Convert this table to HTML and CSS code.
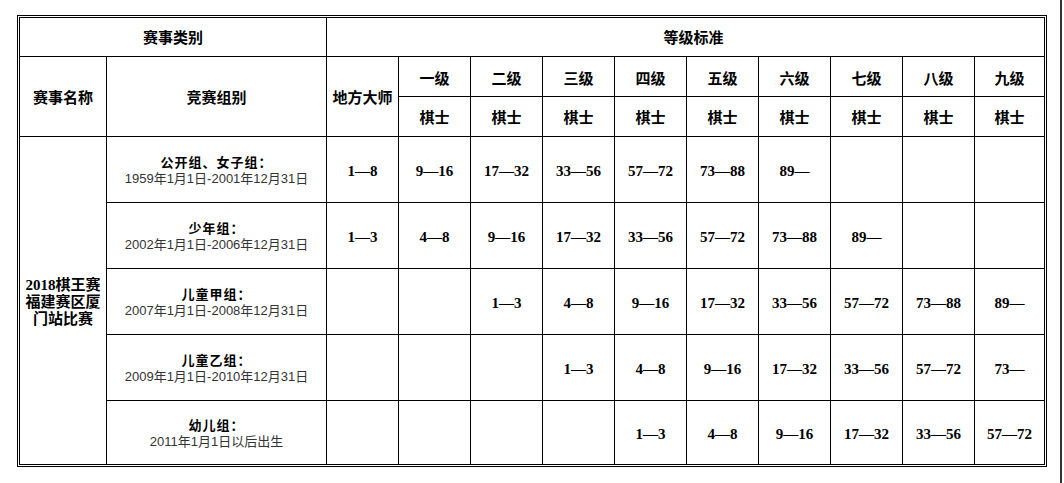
FILE: index.html
```html
<!DOCTYPE html>
<html lang="zh">
<head>
<meta charset="utf-8">
<title>等级标准</title>
<link rel="stylesheet" href="styles.css">
</head>
<body>
<div class="page">
  <div class="frame">
    <div class="grid">
      <div class="cell head span-cat">赛事类别</div>
      <div class="cell head span-std">等级标准</div>

      <div class="cell head rows-2">赛事名称</div>
      <div class="cell head rows-2">竞赛组别</div>
      <div class="cell head rows-2">地方大师</div>
      <div class="cell head lvl">一级</div>
      <div class="cell head lvl">二级</div>
      <div class="cell head lvl">三级</div>
      <div class="cell head lvl">四级</div>
      <div class="cell head lvl">五级</div>
      <div class="cell head lvl">六级</div>
      <div class="cell head lvl">七级</div>
      <div class="cell head lvl">八级</div>
      <div class="cell head lvl">九级</div>
      <div class="cell head">棋士</div>
      <div class="cell head">棋士</div>
      <div class="cell head">棋士</div>
      <div class="cell head">棋士</div>
      <div class="cell head">棋士</div>
      <div class="cell head">棋士</div>
      <div class="cell head">棋士</div>
      <div class="cell head">棋士</div>
      <div class="cell head">棋士</div>

      <div class="cell event rows-5">2018棋王赛<br>福建赛区厦<br>门站比赛</div>

      <div class="cell group"><span class="g-name">公开组、女子组：</span><span class="g-date">1959年1月1日-2001年12月31日</span></div>
      <div class="cell num">1—8</div>
      <div class="cell num">9—16</div>
      <div class="cell num">17—32</div>
      <div class="cell num">33—56</div>
      <div class="cell num">57—72</div>
      <div class="cell num">73—88</div>
      <div class="cell num">89—</div>
      <div class="cell num"></div>
      <div class="cell num"></div>
      <div class="cell num"></div>

      <div class="cell group"><span class="g-name">少年组：</span><span class="g-date">2002年1月1日-2006年12月31日</span></div>
      <div class="cell num">1—3</div>
      <div class="cell num">4—8</div>
      <div class="cell num">9—16</div>
      <div class="cell num">17—32</div>
      <div class="cell num">33—56</div>
      <div class="cell num">57—72</div>
      <div class="cell num">73—88</div>
      <div class="cell num">89—</div>
      <div class="cell num"></div>
      <div class="cell num"></div>

      <div class="cell group"><span class="g-name">儿童甲组：</span><span class="g-date">2007年1月1日-2008年12月31日</span></div>
      <div class="cell num"></div>
      <div class="cell num"></div>
      <div class="cell num">1—3</div>
      <div class="cell num">4—8</div>
      <div class="cell num">9—16</div>
      <div class="cell num">17—32</div>
      <div class="cell num">33—56</div>
      <div class="cell num">57—72</div>
      <div class="cell num">73—88</div>
      <div class="cell num">89—</div>

      <div class="cell group"><span class="g-name">儿童乙组：</span><span class="g-date">2009年1月1日-2010年12月31日</span></div>
      <div class="cell num"></div>
      <div class="cell num"></div>
      <div class="cell num"></div>
      <div class="cell num">1—3</div>
      <div class="cell num">4—8</div>
      <div class="cell num">9—16</div>
      <div class="cell num">17—32</div>
      <div class="cell num">33—56</div>
      <div class="cell num">57—72</div>
      <div class="cell num">73—</div>

      <div class="cell group"><span class="g-name">幼儿组：</span><span class="g-date">2011年1月1日以后出生</span></div>
      <div class="cell num"></div>
      <div class="cell num"></div>
      <div class="cell num"></div>
      <div class="cell num"></div>
      <div class="cell num">1—3</div>
      <div class="cell num">4—8</div>
      <div class="cell num">9—16</div>
      <div class="cell num">17—32</div>
      <div class="cell num">33—56</div>
      <div class="cell num">57—72</div>
    </div>
  </div>
</div>
</body>
</html>
```

FILE: styles.css
```css
html, body {
  margin: 0;
  padding: 0;
  background: #fff;
}

.page {
  box-sizing: border-box;
  width: 1062px;
  height: 483px;
  padding: 15px 0 0 17px;
  border-right: 2px solid #333;
}

.frame {
  width: 1024px;
  border: 3px double #000;
}

.grid {
  display: grid;
  grid-template-columns: 86px 219px 71px repeat(8, 71px) 69px;
  grid-template-rows: 38px 39px 39px 65px 65px 65px 65px 63px;
  gap: 1px;
  background: #000;
}

.cell {
  background: #fff;
  display: flex;
  flex-direction: column;
  align-items: center;
  justify-content: center;
  text-align: center;
  color: #000;
  font-family: "Liberation Serif", "Noto Sans CJK SC", serif;
}

.head {
  font-family: "Noto Sans CJK SC", sans-serif;
  font-weight: 700;
  font-size: 15px;
  line-height: 18px;
}

.lvl {
  padding-top: 3px;
}

.span-cat {
  grid-column: 1 / 3;
}

.span-std {
  grid-column: 3 / 13;
  padding-left: 16px;
}

.rows-2 {
  grid-row: span 2;
}

.rows-5 {
  grid-row: span 5;
}

.event {
  font-weight: 700;
  font-size: 15px;
  line-height: 17px;
  padding-top: 4px;
}

.group {
  line-height: 17px;
}

.g-name {
  font-family: "Noto Sans CJK SC", sans-serif;
  font-weight: 700;
  font-size: 13px;
  letter-spacing: 1px;
}

.g-date {
  font-family: "Liberation Sans", "Noto Sans CJK SC", sans-serif;
  font-weight: 400;
  font-size: 13px;
  color: #333;
}

.num {
  font-weight: 700;
  font-size: 15px;
  padding-top: 3px;
}
```
